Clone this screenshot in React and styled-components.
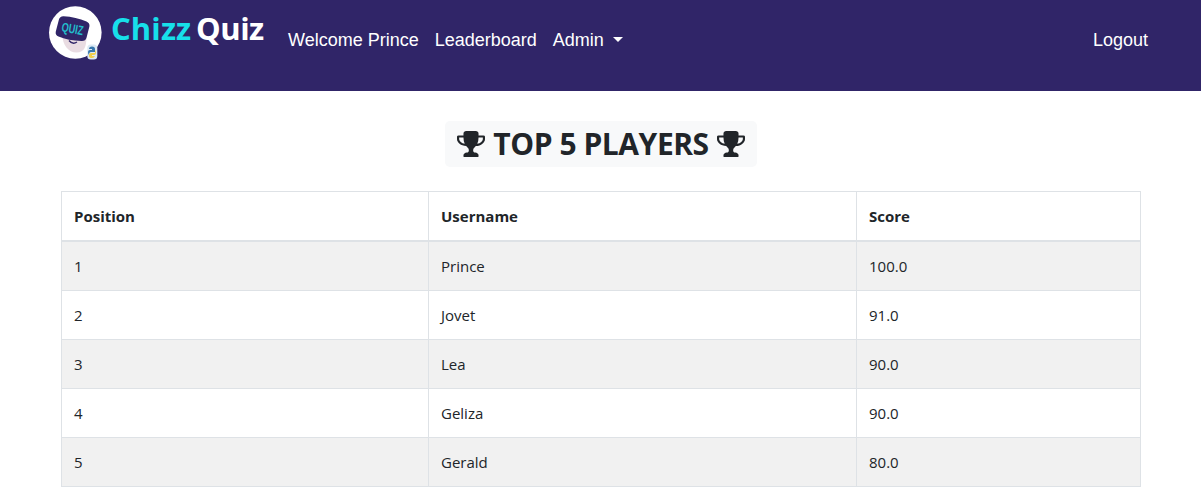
import React from "react";
import styled, { createGlobalStyle } from "styled-components";

const GlobalStyle = createGlobalStyle`
  *, *::before, *::after { box-sizing: border-box; }
  body {
    margin: 0;
    background: #fff;
    color: #212529;
    font: 400 16px/24px "Open Sans", "Noto Sans", sans-serif;
    overflow: hidden;
  }
`;

const Navbar = styled.nav`
  display: flex;
  align-items: flex-start;
  height: 91px;
  padding: 0 45px 0 48px;
  background: #302568;
`;

const Brand = styled.a`
  display: flex;
  padding-top: 6px;
  margin-right: 17px;
`;

const BrandName = styled.span`
  width: 161px;
  padding-left: 9px;
  font-size: 31px;
  font-weight: 700;
  line-height: 44px;
  letter-spacing: -0.5px;
  word-spacing: -2.8px;
  white-space: nowrap;
  color: #fff;
`;

const Accent = styled.span`
  letter-spacing: 0.1px;
  color: #17dfea;
`;

const NavLinks = styled.div`
  display: flex;
  flex: 1;
  padding-top: 27px;
`;

const NavLink = styled.a`
  display: flex;
  align-items: center;
  padding: 0 8px;
  margin-left: ${(p) => (p.$end ? "auto" : "0")};
  font: 400 18px/27px "Liberation Sans", Arial, sans-serif;
  color: #fff;
  white-space: nowrap;
`;

const Caret = styled.span`
  margin: -3px 0 0 9px;
  border-top: 5px solid #fff;
  border-left: 5.5px solid transparent;
  border-right: 5.5px solid transparent;
`;

const Main = styled.main`
  display: flex;
  flex-direction: column;
  align-items: center;
  padding: 30px 60px 0 61px;
`;

const Title = styled.h1`
  display: flex;
  align-items: center;
  justify-content: space-between;
  width: 312px;
  height: 46px;
  margin: 0 0 24px;
  padding: 0 12px;
  border-radius: 5px;
  background: #f8f9fa;
  font-size: 30px;
  font-weight: 700;
  line-height: 46px;
  letter-spacing: -0.45px;
  white-space: nowrap;
`;

const TrophyIcon = styled.svg`
  width: 28px;
  height: 26px;
  fill: currentColor;
`;

const Table = styled.table`
  width: 1080px;
  table-layout: fixed;
  border-collapse: separate;
  border-spacing: 0;
`;

const HeadCell = styled.th`
  width: ${(p) => p.$width}px;
  height: 51px;
  padding: 0 12px;
  border: solid #dee2e6;
  border-width: 1px 1px 2px 0;
  font-size: 15px;
  font-weight: 700;
  text-align: left;
  &:first-child { border-left-width: 1px; }
`;

const Row = styled.tr`
  background: #fff;
  &:nth-child(odd) { background: #f1f1f1; }
`;

const Cell = styled.td`
  height: 49px;
  padding: 0 12px;
  border: solid #dee2e6;
  border-width: 0 1px 1px 0;
  font-size: 15px;
  &:first-child { border-left-width: 1px; }
`;

const Trophy = () => (
  <TrophyIcon viewBox="0 128 1664 1536">
    <path d="M458 883q-74-162-74-371H128v96q0 78 94.500 162T458 883zm1078-275v-96h-256q0 209-74 371 141-29 235.500-113t94.500-162zm128-128v128q0 71-41.500 143t-112 130-173 97.500T1122 1020q-42 54-95 95-38 34-52.500 72.500T960 1280q0 54 30.500 91t97.500 37q75 0 133.500 45.500T1280 1568v64q0 14-9 23t-23 9H416q-14 0-23-9t-9-23v-64q0-69 58.500-114.500T576 1408q67 0 97.500-37t30.500-91q0-54-14.500-92.500T637 1115q-53-41-95-95-113-5-215.500-44.500t-173-97.500T41.500 748 0 608V480q0-40 28-68t68-28h288v-96q0-66 47-113t113-47h576q66 0 113 47t47 113v96h288q40 0 68 28t28 68z" />
  </TrophyIcon>
);

const Logo = () => (
  <svg width="54" height="54" viewBox="0 0 54 54">
    <circle cx="27.300" cy="26.500" r="26.300" fill="#fff" />
    <path d="M14 29c1 10 6 17.500 14.500 17.500S38 40 38.500 32z" fill="#e9dce2" />
    <path d="M21 34.500q3.500 4.500 8 1.500" fill="none" stroke="#302568" strokeWidth="1.300" />
    <path d="M15.500 10.300Q28 11 38.500 15.500q3.500 1.500 2.900 5L38.600 31.500q-1 3.700-5 3.500Q20 34.500 10.500 30.500q-3.500-1.500-2.700-5L10.800 14q1-3.800 4.700-3.700z" fill="#302568" />
    <text x="13" y="25.300" transform="rotate(10 13 25.300)" textLength="22" lengthAdjust="spacingAndGlyphs" fontFamily="Liberation Sans, sans-serif" fontSize="13" fontWeight="700" fill="#22bdcc">QUIZ</text>
    <rect x="39.300" y="38.500" width="10" height="15" rx="3.500" fill="#dce9f4" />
    <path d="M44 40.500q3 0 3 2.500v3h-4q-2 0-2 3-1-1-1-3 0-2 2-2h2v-1h-3q0-2.500 3-2.500z" fill="#3978ad" />
    <path d="M47 44q1 1 1 3t-2 2h-2v1h3q-1 2-3 2-3 0-3-2v-1q0-2 2-2h4z" fill="#f2cf4c" />
  </svg>
);

const columns = [
  ["Position", 368],
  ["Username", 428],
  ["Score", 284],
];

const players = [
  ["Prince", "100.0"],
  ["Jovet", "91.0"],
  ["Lea", "90.0"],
  ["Geliza", "90.0"],
  ["Gerald", "80.0"],
];

export default function App() {
  return (
    <>
      <GlobalStyle />
      <Navbar>
        <Brand>
          <Logo />
          <BrandName><Accent>Chizz</Accent> Quiz</BrandName>
        </Brand>
        <NavLinks>
          <NavLink>Welcome Prince</NavLink>
          <NavLink>Leaderboard</NavLink>
          <NavLink>Admin<Caret /></NavLink>
          <NavLink $end>Logout</NavLink>
        </NavLinks>
      </Navbar>
      <Main>
        <Title><Trophy /><span>TOP 5 PLAYERS</span><Trophy /></Title>
        <Table>
          <thead>
            <tr>{columns.map(([name, width]) => <HeadCell key={name} $width={width}>{name}</HeadCell>)}</tr>
          </thead>
          <tbody>
            {players.map(([name, score], i) => (
              <Row key={name}>
                <Cell>{i + 1}</Cell>
                <Cell>{name}</Cell>
                <Cell>{score}</Cell>
              </Row>
            ))}
          </tbody>
        </Table>
      </Main>
    </>
  );
}
